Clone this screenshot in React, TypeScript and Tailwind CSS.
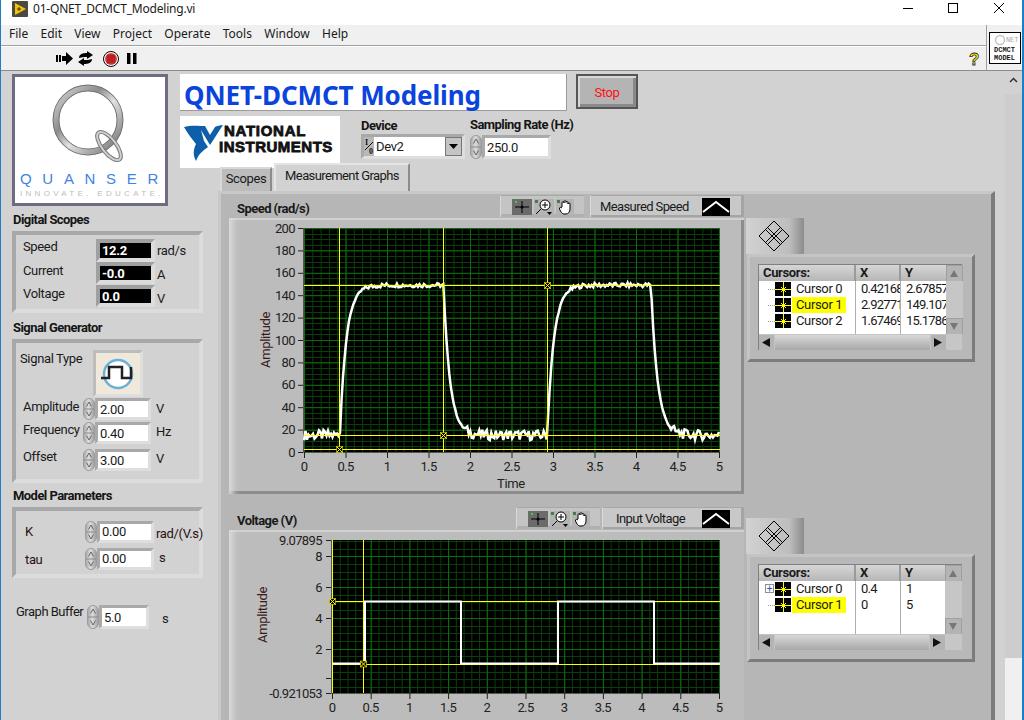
import React from "react";

const sans = "font-['Roboto',sans-serif] tracking-[-0.35px]";

// seeded noise, so that the trace is the same on every run
const noise = (i: number) => {
  const v = Math.sin(i * 12.9898) * 43758.5453;
  return v - Math.floor(v) - 0.5;
};

const speedAt = (t: number) => {
  const low = 15;
  const high = 149;
  const tau = 0.08;
  const period = 2.5;
  const p = (t - 0.43 + period) % period;
  const up = 1.25;
  if (p < up) return high - (high - low) * Math.exp(-p / tau);
  return low + (high - low) * Math.exp(-(p - up) / tau);
};

const speedPoints = () => {
  const pts: string[] = [];
  for (let i = 0; i <= 277; i++) {
    const t = (i / 277) * 5;
    const v = speedAt(t);
    const amp = v < 22 ? 9 : v > 144 ? 4 : 1.5;
    const x = 304 + t * 83;
    const y = 452 - (v + noise(i) * amp) * 1.12;
    pts.push(`${x.toFixed(1)},${y.toFixed(1)}`);
  }
  return pts.join(" ");
};

const range = (from: number, to: number, step: number) => {
  const out: number[] = [];
  for (let v = from; v <= to + 0.0001; v += step) out.push(v);
  return out;
};

function CursorMark({ x, y }: { x: number; y: number }) {
  return (
    <g stroke="#ffff00" strokeWidth="1">
      <rect x={x - 3} y={y - 3} width="6" height="6" fill="#000" strokeOpacity="0.55" />
      <path d={`M${x - 3} ${y - 3}L${x + 3} ${y + 3}M${x + 3} ${y - 3}L${x - 3} ${y + 3}`} />
    </g>
  );
}

function Plot({
  left,
  right,
  top,
  bottom,
  xUnit,
  yTicks,
  yMinor,
  yLabelX,
  children,
}: {
  left: number;
  right: number;
  top: number;
  bottom: number;
  xUnit: number;
  yTicks: { y: number; label: string }[];
  yMinor: number[];
  yLabelX: number;
  children: React.ReactNode;
}) {
  const xMajor = range(0, 5, 0.5);
  const xDim = range(0, 5, 0.1);
  return (
    <>
      <rect x={left} y={top} width={right - left} height={bottom - top} fill="#000" />
      {xDim.map((v) => (
        <line key={v} x1={left + v * xUnit + 0.5} x2={left + v * xUnit + 0.5} y1={top} y2={bottom} stroke="#0a3f0a" />
      ))}
      {yMinor.map((y) => (
        <line key={y} x1={left} x2={right} y1={y + 0.5} y2={y + 0.5} stroke="#0a3f0a" />
      ))}
      {xMajor.map((v) => (
        <line key={v} x1={left + v * xUnit + 0.5} x2={left + v * xUnit + 0.5} y1={top} y2={bottom} stroke="#0c6f0c" />
      ))}
      {yTicks.map((t) => (
        <line key={t.label} x1={left} x2={right} y1={t.y + 0.5} y2={t.y + 0.5} stroke="#0c6f0c" />
      ))}
      <path d={`M${left - 0.5} ${top}V${bottom + 0.5}H${right}`} stroke="#555" fill="none" />
      {children}
      {yTicks.map((t) => (
        <g key={t.label}>
          <line x1={left - 6} x2={left - 1} y1={t.y + 0.5} y2={t.y + 0.5} stroke="#222" />
          <text x={yLabelX} y={t.y + 4.5} textAnchor="end" fontSize="13" fill="#222" className="tracking-[-0.6px]">
            {t.label}
          </text>
        </g>
      ))}
      {xMajor.map((v) => (
        <g key={v}>
          <line x1={left + v * xUnit + 0.5} x2={left + v * xUnit + 0.5} y1={bottom} y2={bottom + 6} stroke="#222" />
          <text x={left + v * xUnit} y={bottom + 19} textAnchor="middle" fontSize="13" fill="#222" className="tracking-[-0.6px]">
            {String(v)}
          </text>
        </g>
      ))}
    </>
  );
}

function SpeedGraph() {
  const yTicks = range(0, 200, 20).map((v) => ({ y: 452 - v * 1.12, label: String(v) }));
  const yMinor = range(0, 200, 5).map((v) => Math.round(452 - v * 1.12));
  return (
    <svg viewBox="229 218 515 276" className="block w-[515px] h-[276px]">
      <Plot left={304} right={720} top={228} bottom={452} xUnit={83} yTicks={yTicks} yMinor={yMinor} yLabelX={295}>
        <polyline points={speedPoints()} fill="none" stroke="#fff" strokeWidth="2.5" />
        <g stroke="#ffff00">
          <path d="M339.5 228V452M443.5 228V452M547.5 228V452" />
          <path d="M304 285.5H720M304 435.5H720M304 449.5H720" />
        </g>
        <CursorMark x={339.5} y={449.5} />
        <CursorMark x={443.5} y={435.5} />
        <CursorMark x={547.5} y={285.5} />
      </Plot>
      <text transform="translate(270 340) rotate(-90)" textAnchor="middle" fontSize="13" fill="#3a1a1a">
        Amplitude
      </text>
      <text x="511" y="488" textAnchor="middle" fontSize="13" fill="#222">
        Time
      </text>
    </svg>
  );
}

function VoltageGraph() {
  const yAt = (v: number) => 679.4 - v * 15.4;
  const yTicks = [8, 6, 4, 2].map((v) => ({ y: Math.round(yAt(v)), label: String(v) }));
  const yMinor = range(-0.5, 9, 0.5).map((v) => Math.round(yAt(v)));
  return (
    <svg viewBox="229 530 515 190" className="block w-[515px] h-[190px]">
      <Plot left={332} right={720} top={540} bottom={693} xUnit={77.4} yTicks={yTicks} yMinor={yMinor} yLabelX={322}>
        <g stroke="#ffff00">
          <path d="M332.5 540V693M363.5 540V693" />
          <path d="M332 601.5H720M332 664.5H720" />
        </g>
        <path d="M332 663.500H365V601.500H461V663.500H558V601.500H654V663.500H720" fill="none" stroke="#fff" strokeWidth="2" />
        <CursorMark x={332.5} y={601.5} />
        <CursorMark x={363.5} y={664} />
      </Plot>
      <line x1="326" x2="331" y1="678.5" y2="678.5" stroke="#222" />
      <line x1="326" x2="331" y1="693.5" y2="693.5" stroke="#222" />
      <line x1="326" x2="331" y1="540.5" y2="540.5" stroke="#222" />
      <text x="322" y="545" textAnchor="end" fontSize="13" fill="#222" className="tracking-[-0.6px]">
        9.07895
      </text>
      <text x="322" y="698" textAnchor="end" fontSize="13" fill="#222" className="tracking-[-0.6px]">
        -0.921053
      </text>
      <text transform="translate(267 615) rotate(-90)" textAnchor="middle" fontSize="13" fill="#3a1a1a">
        Amplitude
      </text>
    </svg>
  );
}

function Spinner({ h = 22 }: { h?: number }) {
  return (
    <svg width="12" height={h} viewBox={`0 0 12 ${h}`} className="block shrink-0">
      <defs>
        <linearGradient id="spin" x1="0" x2="1" y1="0" y2="0">
          <stop offset="0" stopColor="#a4a4a4" />
          <stop offset="0.45" stopColor="#dddddd" />
          <stop offset="1" stopColor="#9a9a9a" />
        </linearGradient>
      </defs>
      <rect x="0.5" y="0.5" width="11" height={h - 1} rx="5.5" fill="url(#spin)" stroke="#9c9c9c" />
      <line x1="1" x2="11" y1={h / 2} y2={h / 2} stroke="#8a8a8a" />
      <path d="M6 4L3.500 8.500M6 4L8.500 8.500" stroke="#666" fill="none" />
      <path d={`M6 ${h - 4}L3.500 ${h - 8.5}M6 ${h - 4}L8.500 ${h - 8.5}`} stroke="#666" fill="none" />
    </svg>
  );
}

function NumField({ value, w, h = 22 }: { value: string; w: number; h?: number }) {
  return (
    <div
      style={{ width: w, height: h }}
      className="shrink-0 border-[3px] border-t-[#a9a9a9] border-l-[#a9a9a9] border-r-[#dedede] border-b-[#dedede] bg-white flex items-center pl-[2px] text-[13px] text-[#1a1a1a] leading-none"
    >
      {value}
    </div>
  );
}

function Indicator({ value, h }: { value: string; h: number }) {
  return (
    <div
      style={{ height: h }}
      className="w-[59px] shrink-0 border-[4px] border-t-[#a0a0a0] border-l-[#a0a0a0] border-r-[#dcdcdc] border-b-[#dcdcdc] bg-black flex items-center pl-[2px] text-white text-[13px] font-bold leading-none"
    >
      {value}
    </div>
  );
}

function Heading({ children, className }: { children: React.ReactNode; className?: string }) {
  return (
    <div className={`text-[13px] font-bold text-[#151515] leading-[16px] tracking-[-0.55px] whitespace-nowrap ${className ?? ""}`}>
      {children}
    </div>
  );
}

function Recess({ height, children }: { height: number; children: React.ReactNode }) {
  return (
    <div
      style={{ height }}
      className="w-[191px] border-[4px] border-t-[#a8a8a8] border-l-[#a8a8a8] border-r-[#dcdcdc] border-b-[#dcdcdc]"
    >
      {children}
    </div>
  );
}

function QuanserLogo() {
  return (
    <div className="w-[156px] h-[132px] border-[3px] border-[#6d6d82] bg-white shrink-0">
      <svg viewBox="15 77 150 126" className="block w-[150px] h-[126px]">
        <defs>
          <linearGradient id="ring" x1="0" y1="0" x2="1" y2="1">
            <stop offset="0" stopColor="#d8d8d8" />
            <stop offset="0.35" stopColor="#8c8c8c" />
            <stop offset="0.55" stopColor="#e2e2e2" />
            <stop offset="1" stopColor="#6a6a6a" />
          </linearGradient>
        </defs>
        <circle cx="88" cy="120" r="32" fill="none" stroke="#707070" strokeWidth="7" />
        <circle cx="88" cy="120" r="32" fill="none" stroke="url(#ring)" strokeWidth="5" />
        <ellipse cx="109" cy="146" rx="17" ry="7" transform="rotate(52 109 146)" fill="none" stroke="#777" strokeWidth="4" />
        <ellipse cx="109" cy="146" rx="17" ry="7" transform="rotate(52 109 146)" fill="none" stroke="#cfcfcf" strokeWidth="2" />
        <text x="20" y="184" fontSize="15" fill="#3f83e4" textLength="138" fontFamily="Liberation Sans">
          QUANSER
        </text>
        <text x="20" y="196" fontSize="8" fill="#bdbdbd" textLength="140" fontFamily="Liberation Sans">
          INNOVATE. EDUCATE.
        </text>
      </svg>
    </div>
  );
}

function NiLogo() {
  return (
    <div className="w-[160px] h-[52px] bg-white shrink-0">
      <svg viewBox="0 0 160 52" className="block w-[160px] h-[52px]">
        <path
          d="M4 11C10 9 19 10 25 10L30 19L35 11C37 10 40 9 43 9C39 15 34 23 30 29L21 14L24 25L28 31C24 34 19 37 16 45C13 40 13 34 16 28C11 22 7 16 4 11Z"
          fill="#0c5fa8"
        />
        <text x="44" y="20" fontSize="15" fontWeight="900" fill="#111" stroke="#111" strokeWidth="0.8" textLength="81" fontFamily="Liberation Sans">
          NATIONAL
        </text>
        <text x="39" y="36" fontSize="15" fontWeight="900" fill="#111" stroke="#111" strokeWidth="0.8" textLength="113" fontFamily="Liberation Sans">
          INSTRUMENTS
        </text>
      </svg>
    </div>
  );
}

function GraphTools({ width }: { width: number }) {
  return (
    <div
      style={{ width }}
      className="h-[22px] bg-[#c4c4c4] border-t border-t-[#a8a8a8] border-l border-l-[#d8d8d8] flex items-center pl-[11px] gap-[2px] shadow-[inset_0_-3px_0_#b0b0b0]"
    >
      <div className="w-[20px] h-[16px] bg-[#6b6b6b] flex items-center justify-center">
        <svg width="18" height="14" viewBox="0 0 18 14">
          <path d="M9 1V13M2 7H16" stroke="#000" />
          <circle cx="9" cy="7" r="1.500" fill="#000" />
          <rect x="2" y="1" width="2" height="2" fill="#35d335" />
        </svg>
      </div>
      <div className="w-[20px] h-[16px] bg-[#b4b4b4] flex items-center justify-center">
        <svg width="20" height="16" viewBox="0 0 20 16">
          <rect x="1" y="1" width="3" height="3" fill="#4a7a4a" />
          <circle cx="11" cy="6" r="5" fill="#fff" stroke="#000" />
          <path d="M8 6H14M11 3V9M7 10L2 15" stroke="#000" />
          <path d="M13 13L18 13L15.500 16Z" fill="#000" />
        </svg>
      </div>
      <div className="w-[18px] h-[16px] bg-[#b4b4b4] flex items-center justify-center">
        <svg width="18" height="16" viewBox="0 0 18 16">
          <rect x="1" y="1" width="3" height="3" fill="#4a7a4a" />
          <path
            d="M6 8V4M6 4C6 2 8 2 8 4V3C8 1 10 1 10 3V3.500C10 2 12 2 12 4V5C12 3.500 14 3.500 14 5V10C14 13 12 15 10 15H8C6 15 5 13 3.500 10C3 8 5 8 6 9"
            fill="#fff"
            stroke="#000"
          />
        </svg>
      </div>
    </div>
  );
}

function PlotLegend({ label, width, inset }: { label: string; width: number; inset: string }) {
  return (
    <div
      style={{ width }}
      className={`h-[22px] bg-[#c8c8c8] border-t border-t-[#a8a8a8] border-l border-l-[#dadada] shadow-[inset_-3px_-2px_0_#a4a4a4] flex items-center ${inset} pr-[14px] justify-between text-[13px] text-[#1a1a1a] tracking-[-0.6px]`}
    >
      <span>{label}</span>
      <svg width="28" height="18" viewBox="0 0 28 18" className="bg-black shrink-0">
        <path d="M1 14L14 4L27 14" stroke="#fff" strokeWidth="2" fill="none" />
      </svg>
    </div>
  );
}

function Palette() {
  return (
    <div className="w-[58px] h-[36px] bg-[linear-gradient(90deg,#d2d2d2,#bdbdbd_75%,#8c8c8c)] flex items-center pl-[12px]">
      <svg width="32" height="32" viewBox="0 0 32 32">
        <path d="M16 1L31 16L16 31L1 16Z M7.500 9.500L22.500 24.500 M9.500 7.500L24.500 22.500 M24.500 9.500L9.500 24.500 M22.500 7.500L7.500 22.500" stroke="#000" fill="none" />
      </svg>
    </div>
  );
}

function CursorSwatch() {
  return (
    <svg width="16" height="14" viewBox="0 0 16 14" className="bg-black shrink-0">
      <path d="M0 7.500H16M8.500 0V14" stroke="#ffff00" />
      <path d="M6 5L11 10M11 5L6 10" stroke="#ffff00" />
    </svg>
  );
}

type CursorRow = { name: string; x: string; y: string; active?: boolean };

function TriButton({ dir }: { dir: "up" | "down" | "left" | "right" }) {
  const d = {
    up: "M7 4L3 11H11Z",
    down: "M7 11L3 4H11Z",
    left: "M3 7.500L11 3V12Z",
    right: "M11 7.500L3 3V12Z",
  }[dir];
  const fill = dir === "up" || dir === "down" ? "#777" : "#111";
  return (
    <svg width="15" height="15" viewBox="0 0 15 15" className="bg-[#b4b4b4] shrink-0">
      <path d={d} fill={fill} />
    </svg>
  );
}

function CursorPanel({ rows, tree }: { rows: CursorRow[]; tree: "dots" | "plus" }) {
  return (
    <div className="w-[228px] h-[108px] ml-[1px] bg-[#b8b8b8] border-[3px] border-t-[#c4c4c4] border-l-[#c4c4c4] border-r-[#7c7c7c] border-b-[#7c7c7c] pt-[7px] pl-[8px]">
      <div className="w-[204px] h-[86px] border-t border-l border-[#808080] flex bg-[#c6c6c6]">
        <div className="w-[187px] flex flex-col">
          <div className="h-[16px] flex text-[13px] font-bold leading-[15px] text-[#1a1a1a] bg-[linear-gradient(180deg,#d6d6d6,#b6b6b6)]">
            <div className="w-[97px] pl-[4px] border-r-2 border-r-[#9a9a9a]">Cursors:</div>
            <div className="w-[45px] pl-[4px] border-r-2 border-r-[#9a9a9a]">X</div>
            <div className="flex-1 pl-[4px]">Y</div>
          </div>
          <div className="h-[53px] bg-white flex text-[13px] leading-[16px] text-[#1a1a1a] overflow-hidden">
            <div className="w-[97px] shrink-0 border-r border-r-[#b0b0b0] relative">
              {rows.map((r, i) => (
                <div key={r.name} className="h-[16px] flex items-center pl-[16px]">
                  {tree === "plus" && i === 0 ? (
                    <div className="absolute left-[6px] top-[3px] w-[9px] h-[9px] border border-[#909090] bg-white text-[#3355aa] text-[10px] leading-[7px] text-center">
                      +
                    </div>
                  ) : (
                    <div className="absolute left-[9px] w-[7px] border-t border-dotted border-[#999]" />
                  )}
                  <CursorSwatch />
                  <span className={`ml-[1px] px-[4px] ${r.active ? "bg-[#ffff00]" : ""}`}>{r.name}</span>
                </div>
              ))}
            </div>
            <div className="w-[45px] shrink-0 border-r border-r-[#b0b0b0] pl-[5px] overflow-hidden tracking-[-0.8px]">
              {rows.map((r) => (
                <div key={r.name} className="h-[16px]">
                  {r.x}
                </div>
              ))}
            </div>
            <div className="flex-1 pl-[5px] overflow-hidden tracking-[-0.8px]">
              {rows.map((r) => (
                <div key={r.name} className="h-[16px] whitespace-nowrap">
                  {r.y}
                </div>
              ))}
            </div>
          </div>
          <div className="h-[16px] flex items-center bg-[#c4c4c4]">
            <TriButton dir="left" />
            <div className="flex-1 h-[15px] mx-[1px] bg-[linear-gradient(180deg,#d8d8d8,#a8a8a8)]" />
            <TriButton dir="right" />
          </div>
        </div>
        <div className="flex-1 flex flex-col justify-between h-[69px] bg-[#c6c6c6]">
          <div className="h-[16px] bg-[#c0c0c0] border border-[#a0a0a0] flex justify-center">
            <TriButton dir="up" />
          </div>
          <div className="h-[16px] bg-[#c0c0c0] border border-[#a0a0a0] flex justify-center">
            <TriButton dir="down" />
          </div>
        </div>
      </div>
    </div>
  );
}

export default function App() {
  const speedCursors: CursorRow[] = [
    { name: "Cursor 0", x: "0.42168", y: "2.67857" },
    { name: "Cursor 1", x: "2.92771", y: "149.107", active: true },
    { name: "Cursor 2", x: "1.67469", y: "15.1786" },
  ];
  const voltageCursors: CursorRow[] = [
    { name: "Cursor 0", x: "0.4", y: "1" },
    { name: "Cursor 1", x: "0", y: "5", active: true },
  ];

  return (
    <div className={`w-[1024px] h-[720px] overflow-hidden flex flex-col bg-white border-l border-r-2 border-[#1a7fc4] ${sans} text-[#1a1a1a]`}>
      {/* title bar */}
      <div className="h-[25px] flex items-start shrink-0 bg-white pt-[1px] font-['Noto_Sans',sans-serif] tracking-normal">
        <svg width="16" height="16" viewBox="0 0 16 16" className="ml-[11px]">
          <rect width="16" height="16" rx="1" fill="#4a4a44" />
          <path d="M3 2L14 8L3 14Z" fill="#f5c400" />
          <path d="M5 8H9M7 6V10" stroke="#333" />
        </svg>
        <span className="ml-[5px] text-[12px] leading-[16px] tracking-[-0.2px]">01-QNET_DCMCT_Modeling.vi</span>
        <div className="ml-auto flex items-center text-black mt-[1px]">
          <svg width="12" height="12" viewBox="0 0 12 12" className="mr-[33px]">
            <path d="M1 6.500H11" stroke="#000" />
          </svg>
          <svg width="12" height="12" viewBox="0 0 12 12" className="mr-[34px]">
            <rect x="1.500" y="1.500" width="9" height="9" fill="none" stroke="#000" />
          </svg>
          <svg width="12" height="12" viewBox="0 0 12 12" className="mr-[17px]">
            <path d="M1 1L11 11M11 1L1 11" stroke="#000" />
          </svg>
        </div>
      </div>

      <div className="flex shrink-0 h-[46px]">
        <div className="flex-1 flex flex-col bg-[#f0f0f0] border-r border-r-[#a0a0a0]">
          {/* menu */}
          <div className="h-[21px] flex items-center border-b border-b-[#a0a0a0] text-[12px] pl-[8px] pb-[2px] gap-[12.3px] font-['Noto_Sans',sans-serif] tracking-normal">
            {["File", "Edit", "View", "Project", "Operate", "Tools", "Window", "Help"].map((m) => (
              <span key={m}>{m}</span>
            ))}
          </div>
          {/* toolbar */}
          <div className="flex-1 flex items-center border-t border-t-white border-b border-b-[#8c8c8c] pl-[55px] pr-[5px]">
            <svg width="17" height="13" viewBox="0 0 17 13">
              <path d="M0 3H2V10H0ZM3 3H5V10H3ZM6 4H10V0L17 6.500L10 13V9H6Z" fill="#000" />
            </svg>
            <svg width="17" height="15" viewBox="0 0 17 15" className="ml-[4px]">
              <path d="M2 7C2 3 6 2 10 2V0L16 4L10 8V6C7 6 5 6 2 7Z M15 8C15 12 11 13 7 13V15L1 11L7 7V9C10 9 12 9 15 8Z" fill="#000" />
            </svg>
            <svg width="16" height="16" viewBox="0 0 16 16" className="ml-[9px]">
              <circle cx="8" cy="8" r="7.500" fill="#fff" stroke="#000" />
              <circle cx="8" cy="8" r="6" fill="#d94a4a" />
              <rect x="3.500" y="3.500" width="9" height="9" rx="2" fill="#b92222" />
            </svg>
            <svg width="10" height="11" viewBox="0 0 10 11" className="ml-[8px]">
              <path d="M0 0H3.500V11H0ZM6 0H9.500V11H6Z" fill="#000" />
            </svg>
            <svg width="14" height="20" viewBox="0 0 14 20" className="ml-auto">
              <text x="7" y="16" textAnchor="middle" fontSize="17" fontWeight="700" fill="#ffee00" stroke="#333" strokeWidth="0.8" fontFamily="Liberation Sans">
                ?
              </text>
            </svg>
          </div>
        </div>
        <div className="w-[35px] bg-[#f0f0f0] border-b border-b-[#8c8c8c] flex items-center justify-center">
          <div className="w-[32px] h-[32px] bg-white border border-black text-[7px] font-bold leading-[8px] text-center tracking-normal font-['Liberation_Mono',monospace] flex flex-col justify-end pb-[1px]">
            <div className="flex items-center justify-end pr-[1px] text-[#aaa] font-normal">
              <svg width="12" height="12" viewBox="0 0 12 12">
                <circle cx="6" cy="6" r="4.500" fill="none" stroke="#c4c4c4" strokeWidth="1.500" />
              </svg>
              <span>NET</span>
            </div>
            <div>DCMCT</div>
            <div>MODEL</div>
          </div>
        </div>
      </div>

      {/* front panel */}
      <div className="flex-1 min-h-0 flex bg-[#d2d2d2] overflow-hidden">
        <div className="w-[205px] shrink-0 pl-[11px] pt-[3px] flex flex-col">
          <QuanserLogo />
          <Heading className="mt-[6px] ml-[1px]">Digital Scopes</Heading>
          <div className="mt-[3px]">
            <Recess height={82}>
              <div className="pt-[4px] pl-[7px] text-[13px] leading-[16px]">
                <div className="flex h-[23px]">
                  <span className="w-[73px] shrink-0">Speed</span>
                  <Indicator value="12.2" h={23} />
                  <span className="ml-[2px] mt-[4px]">rad/s</span>
                </div>
                <div className="flex h-[23px]">
                  <span className="w-[73px] shrink-0 mt-[1px]">Current</span>
                  <Indicator value="-0.0" h={22} />
                  <span className="ml-[2px] mt-[5px]">A</span>
                </div>
                <div className="flex h-[23px]">
                  <span className="w-[73px] shrink-0 mt-[1px]">Voltage</span>
                  <Indicator value="0.0" h={22} />
                  <span className="ml-[2px] mt-[6px]">V</span>
                </div>
              </div>
            </Recess>
          </div>
          <Heading className="mt-[7px] ml-[1px]">Signal Generator</Heading>
          <div className="mt-[3px]">
            <Recess height={144}>
              <div className="text-[13px] leading-[16px]">
                <div className="flex pl-[4px] pt-[7px]">
                  <span className="w-[73px] shrink-0 mt-[1px]">Signal Type</span>
                  <div className="w-[50px] h-[47px] border-[3px] border-t-[#bcbcbc] border-l-[#bcbcbc] border-r-[#dedede] border-b-[#dedede] bg-[#efe9dc] flex items-center justify-center">
                    <svg width="34" height="34" viewBox="0 0 34 34">
                      <circle cx="17" cy="17" r="14" fill="#fff" stroke="#6cb0d8" strokeWidth="2.500" />
                      <path d="M0 21H8V10H21V21H30V10" fill="none" stroke="#222" strokeWidth="2.500" />
                    </svg>
                  </div>
                </div>
                <div className="flex items-center pl-[7px] h-[24px]">
                  <span className="w-[60px] shrink-0 -mt-[4px]">Amplitude</span>
                  <Spinner />
                  <NumField value="2.00" w={56} />
                  <span className="ml-[5px]">V</span>
                </div>
                <div className="flex items-center pl-[7px] h-[24px]">
                  <span className="w-[60px] shrink-0 -mt-[6px]">Frequency</span>
                  <Spinner />
                  <NumField value="0.40" w={56} />
                  <span className="ml-[5px] -mt-[2px]">Hz</span>
                </div>
                <div className="flex items-center pl-[7px] h-[26px] mt-[2px]">
                  <span className="w-[60px] shrink-0 -mt-[6px]">Offset</span>
                  <Spinner />
                  <NumField value="3.00" w={56} />
                  <span className="ml-[5px] -mt-[2px]">V</span>
                </div>
              </div>
            </Recess>
          </div>
          <Heading className="mt-[5px] ml-[1px]">Model Parameters</Heading>
          <div className="mt-[3px]">
            <Recess height={71}>
              <div className="text-[13px] leading-[16px] pt-[8px] text-[#2a1010]">
                <div className="flex items-center h-[25px]">
                  <span className="w-[69px] shrink-0 pl-[9px]">K</span>
                  <Spinner />
                  <NumField value="0.00" w={57} />
                  <span className="ml-[2px] mt-[4px] whitespace-nowrap">rad/(V.s)</span>
                </div>
                <div className="flex items-center h-[25px] mt-[2px]">
                  <span className="w-[69px] shrink-0 pl-[9px] mt-[3px]">tau</span>
                  <Spinner />
                  <NumField value="0.00" w={57} />
                  <span className="ml-[5px] -mt-[2px]">s</span>
                </div>
              </div>
            </Recess>
          </div>
          <div className="flex items-center mt-[27px] text-[13px] pl-[4px]">
            <span className="w-[71px] shrink-0 whitespace-nowrap -mt-[10px] tracking-[-0.5px]">Graph Buffer</span>
            <Spinner h={24} />
            <NumField value="5.0" w={50} h={24} />
            <span className="ml-[13px] mt-[4px]">s</span>
          </div>
        </div>

        <div className="flex-1 min-w-0 flex flex-col">
          {/* panel header */}
          <div className="-ml-[26px] pt-[3px] flex flex-col">
            <div className="flex items-start">
              <div className="w-[387px] h-[37px] bg-white border-r border-b border-[#9a9a9a] flex items-center pl-[4px] pt-[6px] text-[26px] font-bold text-[#0a44dc] font-['Noto_Sans',sans-serif] tracking-[-0.1px] whitespace-nowrap">
                QNET-DCMCT Modeling
              </div>
              <div className="ml-[9px] w-[62px] h-[35px] border-2 border-[#555] bg-[#b4b4b4] shadow-[inset_2px_2px_0_#d8d8d8,inset_-3px_-3px_0_#8a8a8a] flex items-center justify-center pt-[2px] text-[13px] text-[#ff1010]">
                Stop
              </div>
            </div>
            <div className="flex mt-[5px] h-[48px] items-start">
              <NiLogo />
              <div className="ml-[21px] mt-[2px]">
                <Heading>Device</Heading>
                <div className="w-[104px] h-[25px] border-[3px] border-t-[#a9a9a9] border-l-[#a9a9a9] border-r-[#dedede] border-b-[#dedede] flex items-stretch bg-[#b8b8b8]">
                  <svg width="10" height="19" viewBox="0 0 10 19" className="shrink-0">
                    <text x="1" y="8" fontSize="8" fontWeight="700" fill="#111" fontFamily="Liberation Serif">
                      I
                    </text>
                    <path d="M1 13L9 5" stroke="#111" />
                    <text x="5" y="17" fontSize="8" fontWeight="700" fill="#111" fontFamily="Liberation Serif">
                      0
                    </text>
                  </svg>
                  <div className="flex-1 bg-white flex items-center pl-[2px] text-[13px]">Dev2</div>
                  <div className="w-[17px] bg-[#c4c4c4] border border-[#777] flex items-center justify-center">
                    <svg width="9" height="5" viewBox="0 0 9 5">
                      <path d="M0 0H9L4.500 5Z" fill="#000" />
                    </svg>
                  </div>
                </div>
              </div>
              <div className="ml-[5px] mt-[1px]">
                <Heading>Sampling Rate (Hz)</Heading>
                <div className="flex mt-[2px]">
                  <Spinner h={24} />
                  <NumField value="250.0" w={69} h={24} />
                </div>
              </div>
            </div>
          </div>

          {/* tab control */}
          <div className="ml-[12px] flex flex-col flex-1 min-h-0 -mt-[1px] w-[777px]">
            <div className="flex items-end h-[28px] pl-[2px] gap-[2px] shrink-0 text-[13px]">
              <div className="w-[52px] h-[24px] bg-[#bcbcbc] border-t-2 border-l-2 border-r-2 border-t-[#d8d8d8] border-l-[#d8d8d8] border-r-[#8c8c8c] text-center leading-[20px]">
                Scopes
              </div>
              <div className="w-[136px] h-[28px] bg-[#d2d2d2] border-t-2 border-l-2 border-r-2 border-t-[#e4e4e4] border-l-[#e4e4e4] border-r-[#8c8c8c] text-center leading-[22px] tracking-[-0.6px]">
                Measurement Graphs
              </div>
            </div>
            <div className="flex-1 min-h-0 bg-[#b6b6b6] border-t-[3px] border-t-[#c8c8c8] border-l-[3px] border-l-[#c8c8c8] border-r-[4px] border-r-[#7c7c7c] pl-[8px] overflow-hidden">
              {/* speed graph */}
              <div className="flex">
                <div className="w-[515px]">
                  <div className="h-[24px] flex items-end">
                    <span className="ml-[8px] mb-[1px] text-[13px] font-bold leading-[16px] tracking-[-0.55px]">Speed (rad/s)</span>
                    <div className="ml-auto flex gap-[6px] mb-[1px]">
                      <GraphTools width={84} />
                      <PlotLegend label="Measured Speed" width={154} inset="pl-[9px]" />
                    </div>
                  </div>
                  <div className="h-[276px] bg-[#bcbcbc] shadow-[inset_10px_0_6px_-6px_#dcdcdc,inset_0_2px_0_#d0d0d0,inset_-3px_-3px_0_#8c8c8c]">
                    <SpeedGraph />
                  </div>
                </div>
                <div className="ml-[2px] pt-[24px]">
                  <Palette />
                  <CursorPanel rows={speedCursors} tree="dots" />
                </div>
              </div>
              {/* voltage graph */}
              <div className="flex mt-[12px]">
                <div className="w-[515px]">
                  <div className="h-[24px] flex items-end">
                    <span className="ml-[8px] mb-[1px] text-[13px] font-bold leading-[16px] tracking-[-0.55px]">Voltage (V)</span>
                    <div className="ml-auto flex gap-[2px] mb-[1px]">
                      <GraphTools width={84} />
                      <PlotLegend label="Input Voltage" width={142} inset="pl-[13px]" />
                    </div>
                  </div>
                  <div className="h-[190px] bg-[#bcbcbc] shadow-[inset_10px_0_6px_-6px_#dcdcdc,inset_0_2px_0_#d0d0d0]">
                    <VoltageGraph />
                  </div>
                </div>
                <div className="ml-[2px] pt-[12px]">
                  <Palette />
                  <CursorPanel rows={voltageCursors} tree="plus" />
                </div>
              </div>
            </div>
          </div>
        </div>

        {/* window scrollbar */}
        <div className="w-[17px] shrink-0 flex flex-col bg-[#f0f0f0]">
          <div className="h-[23px] bg-[#d2d2d2] flex justify-center pt-[6px]">
            <svg width="9" height="6" viewBox="0 0 9 6">
              <path d="M1 5L4.500 1.500L8 5" stroke="#333" strokeWidth="1.500" fill="none" />
            </svg>
          </div>
          <div className="h-[564px] bg-[#cdcdcd]" />
        </div>
      </div>
    </div>
  );
}
